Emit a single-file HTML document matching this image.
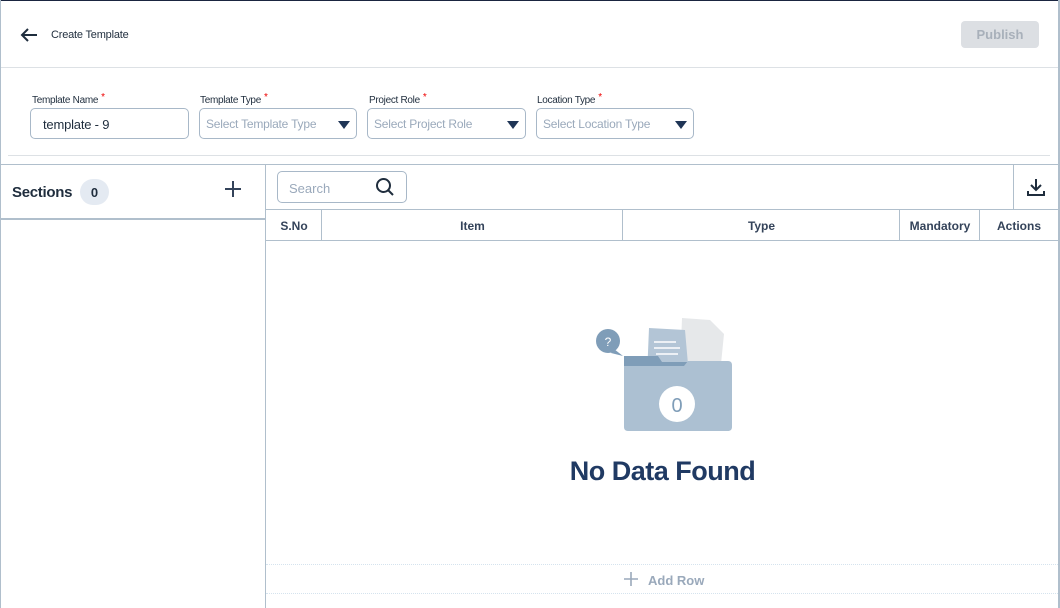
<!DOCTYPE html>
<html><head><style>
*{box-sizing:border-box;margin:0;padding:0}
body{width:1060px;height:608px;overflow:hidden;background:#fff;font-family:"Liberation Sans",sans-serif;position:relative;color:#1f2d3d}
.a{position:absolute}
.lbl{font-size:10px;color:#1f2d3d;letter-spacing:-.3px}
.lbl b{color:#e00;font-weight:normal;position:relative;top:-3px;margin-left:3px}
.inp{height:31px;border:1px solid #a8b8c8;border-radius:5px;font-size:12px;color:#9aa9bb;padding:1px 6px 0;display:flex;align-items:center;justify-content:space-between;letter-spacing:-.2px}
.th{top:210px;height:31px;font-size:12px;font-weight:bold;color:#34435a;display:flex;align-items:center;justify-content:center;border-left:1px solid #b0bfcc;padding-top:1px}
</style></head><body>
<div class="a" style="left:0;top:0;width:1060px;height:1px;background:#1a2540"></div>
<div class="a" style="left:0;top:0;width:1px;height:608px;background:#b0bfcc"></div>
<div class="a" style="left:1058px;top:0;width:2px;height:608px;background:#b0bfcc"></div>
<svg class="a" style="left:20px;top:27px" width="18" height="16" viewBox="0 0 18 16"><path d="M17 8H2M8 2L2 8l6 6" fill="none" stroke="#1f2d3d" stroke-width="2"/></svg>
<div class="a" style="left:51px;top:29px;font-size:11px;color:#1f2d3d;letter-spacing:-.2px">Create Template</div>
<div class="a" style="left:961px;top:21px;width:78px;height:27px;background:#dcdfe3;border-radius:4px;color:#a8b0ba;font-size:13px;font-weight:bold;display:flex;align-items:center;justify-content:center">Publish</div>
<div class="a" style="left:1px;top:67px;width:1057px;height:1px;background:#dde1e5"></div>

<div class="a lbl" style="left:32px;top:95px">Template Name<b>*</b></div>
<div class="a lbl" style="left:200px;top:95px">Template Type<b>*</b></div>
<div class="a lbl" style="left:369px;top:95px">Project Role<b>*</b></div>
<div class="a lbl" style="left:537px;top:95px">Location Type<b>*</b></div>
<div class="a inp" style="left:30px;top:108px;width:159px;color:#1f2d3d;font-size:13px;padding-left:12px">template - 9</div>
<div class="a inp" style="left:199px;top:108px;width:158px">Select Template Type<svg width="12" height="9"><path d="M0 1h12L6 9z" fill="#1f3556"/></svg></div>
<div class="a inp" style="left:367px;top:108px;width:159px">Select Project Role<svg width="12" height="9"><path d="M0 1h12L6 9z" fill="#1f3556"/></svg></div>
<div class="a inp" style="left:536px;top:108px;width:158px">Select Location Type<svg width="12" height="9"><path d="M0 1h12L6 9z" fill="#1f3556"/></svg></div>
<div class="a" style="left:8px;top:155px;width:1042px;height:1px;background:#dde1e5"></div>

<div class="a" style="left:1px;top:164px;width:1057px;height:1px;background:#b0bfcc"></div>
<div class="a" style="left:265px;top:164px;width:1px;height:444px;background:#b0bfcc"></div>
<div class="a" style="left:12px;top:184px;font-size:15px;font-weight:bold;color:#1f2d3d;letter-spacing:-.3px">Sections</div>
<div class="a" style="left:80px;top:179px;width:29px;height:26px;border-radius:13px;background:#e4eaf2;font-size:13px;font-weight:bold;display:flex;align-items:center;justify-content:center;padding-top:1px">0</div>
<svg class="a" style="left:224px;top:180px" width="18" height="18"><path d="M9 1v16M1 9h16" stroke="#34435a" stroke-width="2"/></svg>
<div class="a" style="left:1px;top:218px;width:264px;height:2px;background:#b0bfcc"></div>

<div class="a" style="left:277px;top:171px;width:130px;height:32px;border:1px solid #a8b8c8;border-radius:5px"></div>
<div class="a" style="left:289px;top:181px;font-size:13px;color:#9aa9bb">Search</div>
<svg class="a" style="left:375px;top:177px" width="20" height="20"><circle cx="8.5" cy="8.5" r="6.5" fill="none" stroke="#1f2d3d" stroke-width="2"/><path d="M13 13l5 5" stroke="#1f2d3d" stroke-width="2"/></svg>
<div class="a" style="left:1013px;top:164px;width:1px;height:46px;background:#b0bfcc"></div>
<svg class="a" style="left:1026px;top:177px" width="20" height="20"><path d="M10 2v11M5 8l5 5 5-5M2 14v4h16v-4" fill="none" stroke="#1f2d3d" stroke-width="2"/></svg>
<div class="a" style="left:266px;top:209px;width:792px;height:1px;background:#b0bfcc"></div>
<div class="a" style="left:266px;top:240px;width:792px;height:1px;background:#b0bfcc"></div>
<div class="a th" style="left:266px;width:56px;border-left:none">S.No</div>
<div class="a th" style="left:321px;width:302px">Item</div>
<div class="a th" style="left:622px;width:278px">Type</div>
<div class="a th" style="left:899px;width:81px">Mandatory</div>
<div class="a th" style="left:979px;width:79px">Actions</div>

<svg class="a" style="left:594px;top:316px" width="140" height="118" viewBox="0 0 140 118">
<path d="M88 2l28 2 14 14-4 40-40-2z" fill="#e6e8ea"/>
<path d="M55 12l36 2 4 46-42 0z" fill="#b3c5d6"/>
<path d="M60 26h22M60 32h26M62 38h22" stroke="#fff" stroke-width="1.5"/>
<path d="M30 40h34l4 6h30v20H30z" fill="#7f9db8"/>
<path d="M30 50h60l4-5h40c3 0 4 2 4 4v62c0 3-2 4-4 4H34c-3 0-4-2-4-4z" fill="#acc0d2"/>
<circle cx="83" cy="88" r="18" fill="#fff"/>
<text x="83" y="96" text-anchor="middle" font-family="Liberation Sans" font-size="20" fill="#7f9db8">0</text>
<circle cx="14" cy="25" r="12" fill="#7f9db8"/><path d="M20 33l9 7-12-3z" fill="#7f9db8"/>
<text x="14" y="30" text-anchor="middle" font-family="Liberation Sans" font-size="12" fill="#fff">?</text>
</svg>
<div class="a" style="left:560px;top:456px;width:205px;text-align:center;font-size:27px;font-weight:bold;color:#203a63;letter-spacing:-.5px">No Data Found</div>

<div class="a" style="left:266px;top:564px;width:792px;border-top:1px dotted #d5e3ee"></div>
<div class="a" style="left:266px;top:593px;width:792px;border-top:1px dotted #d5e3ee"></div>
<svg class="a" style="left:623px;top:571px" width="16" height="16"><path d="M8 1v14M1 8h14" stroke="#9aa9bb" stroke-width="1.6"/></svg>
<div class="a" style="left:648px;top:573px;font-size:13px;font-weight:bold;color:#9aa9bb">Add Row</div>
</body></html>
